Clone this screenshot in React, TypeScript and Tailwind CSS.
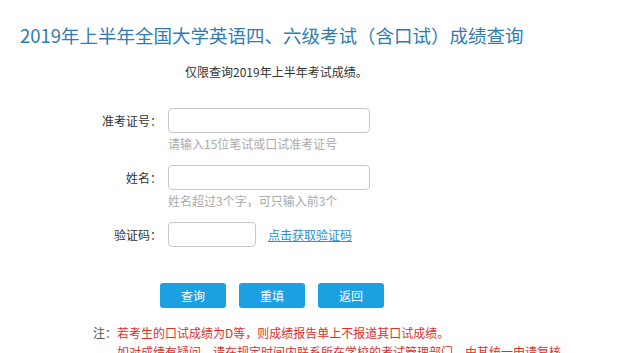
const font = { fontFamily: '"Microsoft YaHei", "Noto Sans CJK SC", "Liberation Sans", sans-serif' };

function Field({ label, hint, children }: { label: string; hint?: string; children: React.ReactNode }) {
  return (
    <div className="grid grid-cols-[162px_1fr] gap-x-[6px]">
      <div className="flex h-[25px] items-center justify-end text-[12px] text-[#333]">{label}</div>
      <div className="flex items-center">{children}</div>
      {hint && (
        <>
          <div />
          <div className="mt-[3px] text-[12px] leading-[16px] text-[#aaa]">{hint}</div>
        </>
      )}
    </div>
  );
}

export default function App() {
  return (
    <div className="h-[353px] w-[640px] overflow-hidden bg-white" style={font}>
      <h1 className="pl-[20px] pt-[23px] text-[18.5px] leading-[24px] font-normal text-[#2f7cb4]">
        2019年上半年全国大学英语四、六级考试（含口试）成绩查询
      </h1>

      <p className="mt-[17px] pl-[185px] text-[12px] leading-[16px] text-[#333]">
        仅限查询2019年上半年考试成绩。
      </p>

      <div className="mt-[28px] flex flex-col gap-[13px]">
        <Field label="准考证号：" hint="请输入15位笔试或口试准考证号">
          <input className="h-[25px] w-[202px] rounded-[4px] border border-[#c8c8c8] bg-white outline-none" />
        </Field>
        <Field label="姓名：" hint="姓名超过3个字，可只输入前3个">
          <input className="h-[25px] w-[202px] rounded-[4px] border border-[#c8c8c8] bg-white outline-none" />
        </Field>
        <Field label="验证码：">
          <input className="h-[25px] w-[88px] rounded-[4px] border border-[#c8c8c8] bg-white outline-none" />
          <a className="ml-[12px] text-[12px] text-[#2a8fd6] underline">点击获取验证码</a>
        </Field>
      </div>

      <div className="mt-[36px] flex gap-[13px] pl-[160px]">
        {["查询", "重填", "返回"].map((t) => (
          <button
            key={t}
            className="h-[25px] w-[66px] rounded-[3px] bg-[#1ba1e2] text-[12px] text-white"
          >
            {t}
          </button>
        ))}
      </div>

      <p className="mt-[17px] pl-[93px] text-[12px] leading-[16px] text-[#e0302a]">
        <span className="text-[#555]">注：</span>若考生的口试成绩为D等，则成绩报告单上不报道其口试成绩。
      </p>
      <p className="mt-[3px] pl-[117px] text-[12px] leading-[16px] text-[#e0302a]">
        如对成绩有疑问，请在规定时间内联系所在学校的考试管理部门，由其统一申请复核。
      </p>
    </div>
  );
}
